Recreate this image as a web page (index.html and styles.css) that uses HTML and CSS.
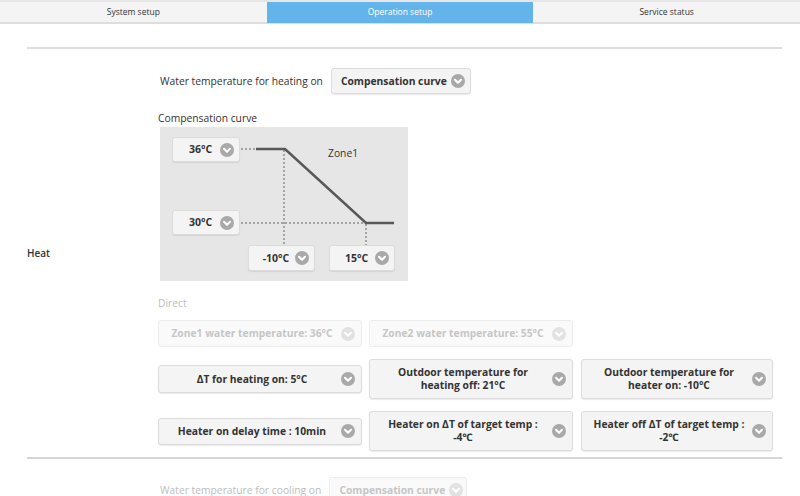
FILE: index.html
```html
<!DOCTYPE html>
<html>
<head>
<meta charset="utf-8">
<link rel="stylesheet" href="styles.css">
</head>
<body>
<div class="tabs">
  <div class="tab">System setup</div>
  <div class="tab active">Operation setup</div>
  <div class="tab">Service status</div>
</div>
<div class="page">
  <div class="rule"></div>
  <div class="section">
    <div class="section-label">Heat</div>
    <div class="section-body">
      <div class="mode-row">
        <span class="mode-label">Water temperature for heating on</span>
        <div class="select mode-select"><span class="sel-text">Compensation curve</span><svg class="chev" viewBox="0 0 14 14"><circle cx="7" cy="7" r="7"/><polyline points="4,5.8 7,8.8 10,5.8"/></svg></div>
      </div>
      <div class="sub-label">Compensation curve</div>
      <div class="chart">
        <svg class="curve" viewBox="0 0 248 154" width="248" height="154">
          <line class="dot" x1="81" y1="22" x2="95" y2="22"/>
          <line class="dot" x1="81" y1="96" x2="206" y2="96"/>
          <line class="dot" x1="124" y1="23" x2="124" y2="118"/>
          <line class="dot" x1="206" y1="97" x2="206" y2="118"/>
          <polyline class="solid" points="96,22 125,22 206,96 234,96"/>
        </svg>
        <div class="select val v36"><span class="sel-text">36°C</span><svg class="chev" viewBox="0 0 14 14"><circle cx="7" cy="7" r="7"/><polyline points="4,5.8 7,8.8 10,5.8"/></svg></div>
        <div class="select val v30"><span class="sel-text">30°C</span><svg class="chev" viewBox="0 0 14 14"><circle cx="7" cy="7" r="7"/><polyline points="4,5.8 7,8.8 10,5.8"/></svg></div>
        <div class="select val vm10"><span class="sel-text">-10°C</span><svg class="chev" viewBox="0 0 14 14"><circle cx="7" cy="7" r="7"/><polyline points="4,5.8 7,8.8 10,5.8"/></svg></div>
        <div class="select val v15"><span class="sel-text">15°C</span><svg class="chev" viewBox="0 0 14 14"><circle cx="7" cy="7" r="7"/><polyline points="4,5.8 7,8.8 10,5.8"/></svg></div>
        <div class="zone">Zone1</div>
      </div>
      <div class="sub-label disabled-text direct">Direct</div>
      <div class="grid">
        <div class="select box short disabled"><span class="sel-text">Zone1 water temperature: 36°C</span><svg class="chev" viewBox="0 0 14 14"><circle cx="7" cy="7" r="7"/><polyline points="4,5.8 7,8.8 10,5.8"/></svg></div>
        <div class="select box short disabled"><span class="sel-text">Zone2 water temperature: 55°C</span><svg class="chev" viewBox="0 0 14 14"><circle cx="7" cy="7" r="7"/><polyline points="4,5.8 7,8.8 10,5.8"/></svg></div>
        <div></div>
        <div class="select box mid"><span class="sel-text">ΔT for heating on: 5°C</span><svg class="chev" viewBox="0 0 14 14"><circle cx="7" cy="7" r="7"/><polyline points="4,5.8 7,8.8 10,5.8"/></svg></div>
        <div class="select box tall"><span class="sel-text">Outdoor temperature for<br>heating off: 21°C</span><svg class="chev" viewBox="0 0 14 14"><circle cx="7" cy="7" r="7"/><polyline points="4,5.8 7,8.8 10,5.8"/></svg></div>
        <div class="select box tall"><span class="sel-text">Outdoor temperature for<br>heater on: -10°C</span><svg class="chev" viewBox="0 0 14 14"><circle cx="7" cy="7" r="7"/><polyline points="4,5.8 7,8.8 10,5.8"/></svg></div>
        <div class="select box short"><span class="sel-text">Heater on delay time : 10min</span><svg class="chev" viewBox="0 0 14 14"><circle cx="7" cy="7" r="7"/><polyline points="4,5.8 7,8.8 10,5.8"/></svg></div>
        <div class="select box tall"><span class="sel-text">Heater on ΔT of target temp :<br>-4℃</span><svg class="chev" viewBox="0 0 14 14"><circle cx="7" cy="7" r="7"/><polyline points="4,5.8 7,8.8 10,5.8"/></svg></div>
        <div class="select box tall"><span class="sel-text">Heater off ΔT of target temp :<br>-2℃</span><svg class="chev" viewBox="0 0 14 14"><circle cx="7" cy="7" r="7"/><polyline points="4,5.8 7,8.8 10,5.8"/></svg></div>
      </div>
    </div>
  </div>
  <div class="rule rule-thin"></div>
  <div class="section cool">
    <div class="section-label"></div>
    <div class="section-body">
      <div class="mode-row cool-row">
        <span class="mode-label disabled-text">Water temperature for cooling on</span>
        <div class="select mode-select disabled"><span class="sel-text">Compensation curve</span><svg class="chev" viewBox="0 0 14 14"><circle cx="7" cy="7" r="7"/><polyline points="4,5.8 7,8.8 10,5.8"/></svg></div>
      </div>
    </div>
  </div>
</div>
</body>
</html>
```

FILE: styles.css
```css
* { box-sizing: border-box; }
html, body {
  margin: 0;
  padding: 0;
  background: #ffffff;
  overflow: hidden;
}
body {
  font-family: "Open Sans", "Noto Sans", "Liberation Sans", sans-serif;
  color: #333333;
  font-size: 10px;
  width: 800px;
  height: 496px;
}
.tabs {
  display: flex;
  height: 24px;
  border-top: 2px solid #e6e6e6;
  border-bottom: 2px solid #dedede;
  background: #f4f4f4;
}
.tab {
  flex: 1;
  text-align: center;
  font-size: 8.5px;
  line-height: 20px;
  color: #333;
}
.tab.active {
  background: #64b4ec;
  color: #ffffff;
  margin-bottom: -1px;
}
.page {
  padding: 0 18px 0 27px;
}
.rule {
  height: 2px;
  background: #dddddd;
  margin-top: 23px;
}
.rule-thin {
  margin-top: 0;
  background: #d6d6d6;
}
.section {
  display: flex;
  align-items: center;
  padding-bottom: 6px;
}
.section-label {
  width: 131px;
  flex: none;
  font-weight: 600;
  font-size: 10px;
  color: #333;
  padding-top: 6px;
}
.section-body {
  display: flex;
  flex-direction: column;
  align-items: flex-start;
}
.mode-row {
  display: flex;
  align-items: center;
  margin-top: 19px;
  margin-left: 2px;
}
.mode-label {
  font-size: 10.3px;
  margin-right: 8px;
  white-space: nowrap;
}
.select {
  display: flex;
  align-items: center;
  background: #f4f4f4;
  border: 1px solid #dcdcdc;
  border-radius: 3px;
  box-shadow: 0 1px 1px rgba(0,0,0,0.08);
  font-weight: 700;
  color: #333;
  font-size: 10.3px;
}
.sel-text {
  flex: 1;
  text-align: center;
  line-height: 13px;
  white-space: nowrap;
}
.chev {
  width: 14px;
  height: 14px;
  flex: none;
}
.chev circle { fill: #a9a9a9; }
.chev polyline {
  fill: none;
  stroke: #ffffff;
  stroke-width: 2;
  stroke-linecap: round;
  stroke-linejoin: round;
}
.mode-select {
  width: 140px;
  height: 26px;
  padding: 0 6px 0 9px;
  gap: 4px;
}
.sub-label {
  font-size: 10.3px;
  line-height: 14px;
  margin-top: 17px;
}
.chart {
  position: relative;
  width: 248px;
  height: 154px;
  background: #e6e6e6;
  margin-top: 2px;
  margin-left: 2px;
}
.curve {
  position: absolute;
  left: 0;
  top: 0;
}
.curve .dot {
  stroke: #a3a3a3;
  stroke-width: 2;
  stroke-dasharray: 2 2;
}
.curve .solid {
  fill: none;
  stroke: #585858;
  stroke-width: 2.5;
}
.val {
  position: absolute;
  width: 68px;
  height: 25px;
  padding: 0 5px 0 8px;
  font-size: 10.5px;
}
.v36 { left: 12px; top: 10px; }
.v30 { left: 12px; top: 83px; }
.vm10 { left: 88px; top: 118px; width: 67px; height: 26px; }
.v15 { left: 169px; top: 118px; width: 66px; height: 26px; }
.zone {
  position: absolute;
  left: 168px;
  top: 19px;
  font-size: 10.3px;
  font-weight: 400;
  color: #333;
}
.direct {
  margin-top: 15px;
}
.disabled-text { color: #bdbdbd; }
.grid {
  display: grid;
  grid-template-columns: 204px 204px 193px;
  column-gap: 7px;
  row-gap: 12px;
  align-items: center;
  margin-top: 10px;
}
.grid > :nth-child(3n) { margin-left: 1px; }
.box {
  padding: 0 6px 0 10px;
  gap: 6px;
}
.box.short { height: 27px; }
.box.mid { height: 28px; }
.box.tall { height: 40px; }
.select.disabled {
  background: #fafafa;
  border-color: #ececec;
  box-shadow: none;
  color: #c6c6c6;
}
.select.disabled .chev circle { fill: #e2e2e2; }
.cool-row {
  margin-top: 18px;
}
.cool-row .mode-select {
  width: 138px;
}
.cool .section-label { height: 1px; padding-top: 0; }
```
